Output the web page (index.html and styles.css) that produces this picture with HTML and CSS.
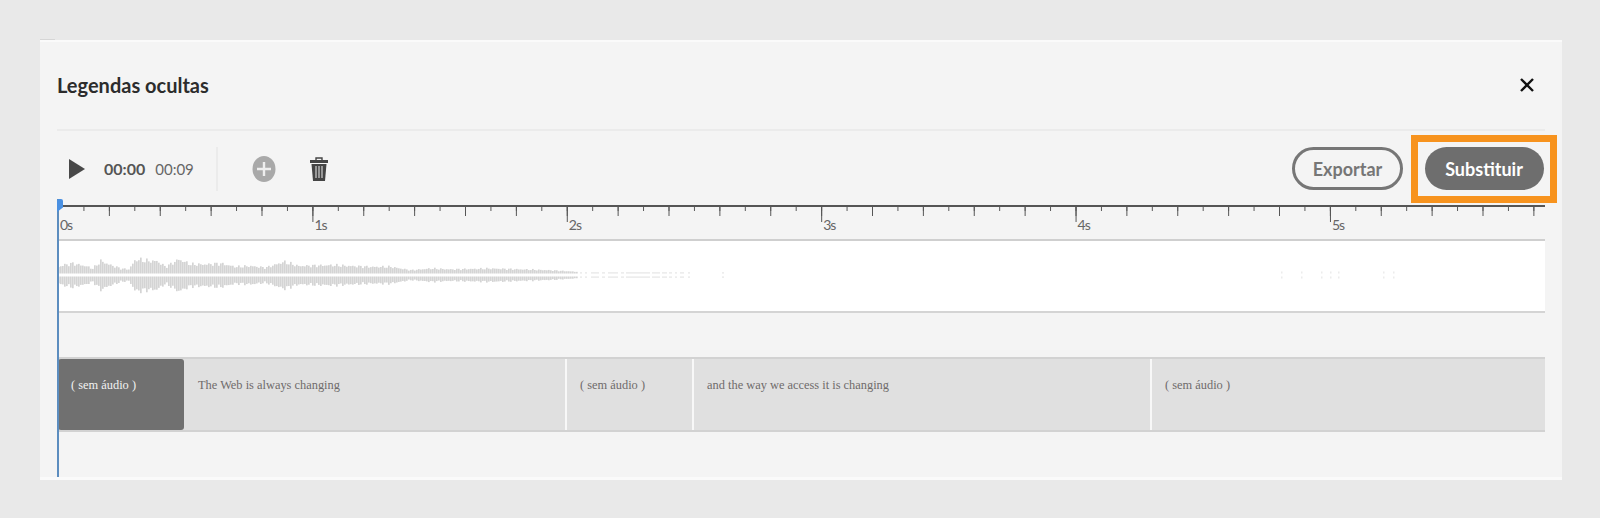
FILE: index.html
```html
<!DOCTYPE html>
<html>
<head>
    <title>Legendas ocultas</title>
    <link rel="stylesheet" href="styles.css">
</head>
<body>
    <div class="panel">
        <div class="panel-head">
            <h2>Legendas ocultas</h2>
            <svg class="close" viewBox="0 0 16 16" width="16" height="16">
                <path d="M2 2 L14 14 M14 2 L2 14" stroke="#111" stroke-width="2.4" fill="none"/>
            </svg>
        </div>
        <div class="toolbar">
            <svg class="play" viewBox="0 0 16 20" width="16" height="20">
                <path d="M0 0 L16 10 L0 20 Z" fill="#484848"/>
            </svg>
            <span class="time-now">00:00</span>
            <span class="time-total">00:09</span>
            <span class="divider"></span>
            <svg class="add" viewBox="0 0 24 26" width="24" height="26">
                <ellipse cx="12" cy="13" rx="11.5" ry="13" fill="#a9a9a9"/>
                <path d="M12 6 V20 M5 13 H19" stroke="#eee" stroke-width="2.4"/>
            </svg>
            <svg class="trash" viewBox="0 0 18 24" width="18" height="24">
                <path d="M6 3 V1 H12 V3" stroke="#444" stroke-width="1.4" fill="none"/>
                <path d="M0 3 H18 V6 H0 Z" fill="#444"/>
                <path d="M1.5 7 H16.5 L15 24 H3 Z" fill="#444"/>
                <path d="M6 9 V21 M9 9 V21 M12 9 V21" stroke="#ddd" stroke-width="1.1"/>
            </svg>
            <div class="actions">
                <button class="btn btn-outline">Exportar</button>
                <div class="highlight">
                    <button class="btn btn-fill">Substituir</button>
                </div>
            </div>
        </div>
        <div class="ruler">
            <div class="ruler-labels">
                <span>0s</span>
                <span>1s</span>
                <span>2s</span>
                <span>3s</span>
                <span>4s</span>
                <span>5s</span>
            </div>
        </div>
        <div class="wave">
            <svg id="waveform" width="1487" height="70" viewBox="0 0 1487 70"></svg>
        </div>
        <div class="captions">
            <div class="seg seg-active" style="width: 126px">( sem áudio )</div>
            <div class="seg" style="width: 382px">The Web is always changing</div>
            <div class="seg" style="width: 127px">( sem áudio )</div>
            <div class="seg" style="width: 458px">and the way we access it is changing</div>
            <div class="seg seg-last">( sem áudio )</div>
        </div>
        <div class="playhead"></div>
    </div>
    <script src="waveform.js"></script>
</body>
</html>
```

FILE: styles.css
```css
body {
    margin: 0;
    background-color: #e9e9e9;
    font-family: Lato, "Noto Sans", sans-serif;
}
.panel {
    position: relative;
    box-sizing: border-box;
    width: 1522px;
    height: 440px;
    margin: 40px 0 0 40px;
    padding: 0 17px;
    background-color: #f4f4f4;
    border-top: 2px solid #fafafa;
    border-bottom: 3px solid #fafafa;
}
.panel::before {
    content: "";
    position: absolute;
    top: -3px;
    left: 0;
    width: 15px;
    height: 1px;
    background-color: #d6d6d6;
}
.panel-head {
    box-sizing: border-box;
    display: flex;
    align-items: center;
    justify-content: space-between;
    height: 89px;
    padding: 0 10px 1px 0;
    border-bottom: 2px solid #ebebeb;
}
.panel-head h2 {
    margin: 0;
    font-size: 20px;
    font-weight: 700;
    color: #2c2c2c;
}
.toolbar {
    display: flex;
    align-items: center;
    height: 74px;
    padding-top: 1px;
    box-sizing: border-box;
}
.play {
    margin-left: 12px;
}
.time-now {
    margin-left: 19px;
    font-size: 16px;
    font-weight: 700;
    color: #555;
}
.time-total {
    margin-left: 10px;
    font-size: 15px;
    color: #666;
}
.divider {
    width: 2px;
    height: 44px;
    margin-left: 22px;
    background-color: #ebebeb;
}
.add {
    margin-left: 34px;
}
.trash {
    margin-left: 34px;
}
.actions {
    display: flex;
    align-items: center;
    margin-left: auto;
    margin-right: -12px;
}
.btn {
    box-sizing: border-box;
    height: 43px;
    border-radius: 22px;
    font-family: Lato, "Noto Sans", sans-serif;
    font-size: 18px;
    font-weight: 700;
}
.btn-outline {
    width: 111px;
    margin-right: 8px;
    border: 3px solid #767676;
    background-color: transparent;
    color: #767676;
}
.btn-fill {
    width: 119px;
    border: none;
    background-color: #6e6e6e;
    color: white;
}
.highlight {
    box-sizing: border-box;
    display: flex;
    align-items: center;
    justify-content: center;
    width: 146px;
    height: 68px;
    border: 7px solid #f7931e;
}
.ruler {
    height: 32px;
    margin-left: 1px;
    border-top: 2px solid #555;
    background-image:
        linear-gradient(to right, #555 1.2px, transparent 1.2px),
        linear-gradient(to right, #555 1.2px, transparent 1.2px),
        linear-gradient(to right, #555 1.2px, transparent 1.2px);
    background-size: 254.4px 15px, 50.88px 9px, 25.44px 4px;
    background-repeat: repeat-x;
}
.ruler-labels {
    display: flex;
    padding-top: 9px;
}
.ruler-labels span {
    box-sizing: border-box;
    flex: 0 0 254.4px;
    padding-left: 2px;
    font-size: 14px;
    letter-spacing: -1px;
    color: #666;
}
.wave {
    height: 70px;
    margin-left: 1px;
    background-color: white;
    border-top: 2px solid #cfcfcf;
    border-bottom: 2px solid #d4d4d4;
}
.wave svg {
    display: block;
}
.captions {
    display: flex;
    height: 71px;
    margin: 44px 0 0 1px;
    background-color: #e0e0e0;
    border-top: 2px solid #d2d2d2;
    border-bottom: 2px solid #d2d2d2;
}
.seg {
    box-sizing: border-box;
    flex: none;
    padding: 19px 0 0 13px;
    font-family: "Liberation Serif", serif;
    font-size: 12.4px;
    color: #6f6b6b;
    border-right: 2px solid #f8f8f8;
}
.seg-active {
    margin: 0 1px 0 0;
    background-color: #707070;
    color: #f2f2f2;
    border-right: none;
    border-radius: 3px;
}
.seg-last {
    flex: 1;
    border-right: none;
}
.playhead {
    position: absolute;
    top: 157px;
    left: 17px;
    width: 2px;
    height: 278px;
    background-color: #5c8dbf;
}
.playhead::before {
    content: "";
    position: absolute;
    top: 0;
    left: 0;
    width: 6px;
    height: 13px;
    background-color: #4a90e2;
    border-radius: 2px 2px 0 0;
    clip-path: polygon(0 0, 100% 0, 100% 65%, 0 100%);
}
```

FILE: waveform.js
```js
// [x, height] points of the upper half, read off the recording
const envelope = [
    [0, 8], [4, 10], [14, 12], [27, 9], [34, 6], [42, 15], [50, 11], [62, 6], [70, 5],
    [77, 17], [90, 15], [98, 15], [107, 8], [120, 17], [132, 11], [147, 11], [162, 12],
    [177, 8], [192, 9], [207, 7], [225, 14], [240, 9], [272, 10], [312, 8], [332, 8],
    [352, 4], [372, 6], [392, 5], [432, 6], [462, 5], [490, 4], [505, 3], [520, 2]
];

function heightAt(x) {
    for (let i = 1; i < envelope.length; i++) {
        const [x0, h0] = envelope[i - 1];
        const [x1, h1] = envelope[i];
        if (x <= x1) {
            return h0 + (h1 - h0) * (x - x0) / (x1 - x0);
        }
    }
    return 0;
}

const svg = document.getElementById('waveform');
const center = 34;
let shapes = '';

function addBar(x, up, down, color, width) {
    shapes += `<rect x="${x}" y="${center - 1.5 - up}" width="${width}" height="${up}" fill="${color}"/>`;
    shapes += `<rect x="${x}" y="${center + 1.5}" width="${width}" height="${down}" fill="${color}"/>`;
}

for (let x = 0; x < 520; x += 2) {
    const wobble = 0.82 + 0.18 * Math.sin(x * 1.7) * Math.cos(x * 0.61);
    const h = heightAt(x) * wobble;
    addBar(x, h, h * 1.05, '#d4d4d4', 1.7);
}

// the tail is only faint dashes: [x, width]
[[522, 2], [527, 2], [533, 8], [544, 3], [550, 10], [563, 3], [568, 24], [594, 8], [604, 5], [611, 3],
 [617, 2], [622, 4], [630, 2], [664, 2]].forEach(([x, width]) => {
    addBar(x, 1.2, 1.2, '#e6e6e6', width);
});
[1223, 1243, 1263, 1272, 1280, 1325, 1335].forEach(x => {
    addBar(x, 2, 2, '#ececec', 1.5);
});

svg.innerHTML = shapes;
```
